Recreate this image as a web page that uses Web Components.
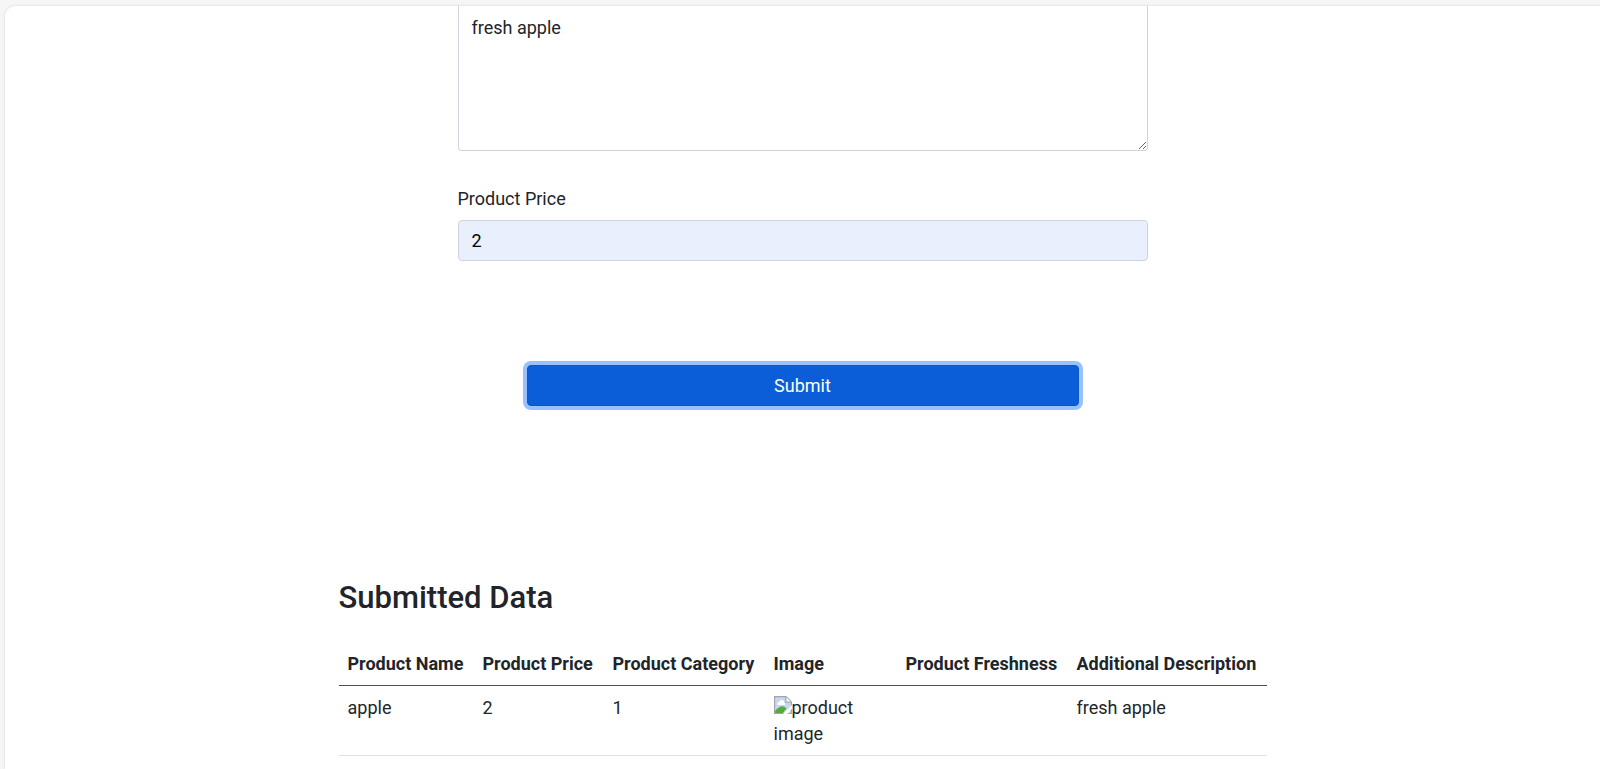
<!DOCTYPE html>
<html lang="en">
<head>
<meta charset="utf-8">
<title>Products</title>
<style>
html, body { height: 100%; }
body {
  margin: 0;
  background: #f6f6f6;
  color: #212529;
  font: 400 18px/26px Roboto, "Noto Sans", sans-serif;
  overflow: hidden;
}
</style>
</head>
<body>
<content-card>
  <product-form></product-form>
  <submitted-data></submitted-data>
</content-card>
<script>
class BaseElement extends HTMLElement {
  connectedCallback() {
    if (!this.shadowRoot) {
      this.attachShadow({ mode: "open" }).innerHTML = this.render();
    }
  }
}

customElements.define("content-card", class extends BaseElement {
  render() {
    return `
<style>
  :host { display: block; box-sizing: border-box; height: 100%; padding: 6px 0 0 5px; }
  main {
    box-sizing: border-box;
    height: 100%;
    overflow: hidden;
    display: flex;
    flex-direction: column;
    align-items: center;
    background: #fff;
    border-radius: 10px 0 0 0;
    box-shadow: 0 0 3px rgba(0, 0, 0, .14);
  }
</style>
<main><slot></slot></main>`;
  }
});

customElements.define("product-form", class extends BaseElement {
  render() {
    return `
<style>
  :host { display: block; width: 100%; max-width: 690px; }
  form { display: flex; flex-direction: column; }
  textarea, input {
    box-sizing: border-box;
    display: block;
    width: 100%;
    margin: 0;
    padding: 6px 13px;
    border: 1px solid #ced4da;
    border-radius: 4px;
    color: inherit;
    font: inherit;
    outline: 0;
  }
  textarea {
    height: 145px;
    padding-top: 9px;
    border-top: 0;
    border-radius: 0 0 4px 4px;
    background: #fff;
    resize: vertical;
  }
  label { margin: 35px 0 8px; }
  input { height: 41px; background: #e8f0fe; color: #000; }
  button {
    align-self: center;
    width: 80%;
    height: 41px;
    margin: 104px 0 0;
    padding: 0;
    border: 1px solid #0a58ca;
    border-radius: 4px;
    background: #0b5ed7;
    box-shadow: 0 0 0 4px #98c1fe;
    color: #fff;
    font: inherit;
  }
</style>
<form onsubmit="return false">
  <textarea aria-label="Additional Description">fresh apple</textarea>
  <label for="price">Product Price</label>
  <input id="price" type="text" value="2">
  <button type="submit">Submit</button>
</form>`;
  }
});

customElements.define("missing-image", class extends BaseElement {
  render() {
    return `
<style>
  :host { display: block; max-width: 110px; }
  svg { width: 18px; height: 18px; vertical-align: 0; }
</style>
<svg viewBox="0 0 16 16" aria-hidden="true">
  <path d="M0 0h11l5 5v11H0z" fill="#a3a3a8"/>
  <path d="M1 1h9v5h5v9H1z" fill="#c5d7f5"/>
  <path d="M11 1v4h4z" fill="#f2f2f2"/>
  <path d="M3 7a2 2 0 0 1 2-2 2 2 0 0 1 4 1 1 1 0 0 1 0 2H3z" fill="#fff"/>
  <path d="M1 15v-2c2-2 4-4 6-4s3 1 4 2l-3 4z" fill="#56aa3b"/>
  <path d="M16 8v3l-4 5H8z" fill="#fff"/>
</svg><slot></slot>`;
  }
});

customElements.define("submitted-data", class extends BaseElement {
  render() {
    return `
<style>
  :host { display: block; width: 100%; max-width: 928px; margin-top: 173px; }
  h3 { margin: 0 0 27px; font-size: 31px; line-height: 37px; font-weight: 500; }
  table { width: 100%; table-layout: fixed; border-collapse: collapse; }
  th, td { padding: 8px 0 8px 9px; text-align: left; vertical-align: top; white-space: nowrap; }
  th { border-bottom: 1px solid #4d5154; font-weight: 700; }
  td { padding-top: 9px; border-bottom: 1px solid #dee2e6; }
  td missing-image { white-space: normal; }
  .name { width: 126px; }
  .price { width: 121px; }
  .category { width: 152px; }
  .image { width: 123px; }
  .freshness { width: 162px; }
</style>
<h3>Submitted Data</h3>
<table>
  <thead>
    <tr>
      <th class="name" scope="col">Product Name</th>
      <th class="price" scope="col">Product Price</th>
      <th class="category" scope="col">Product Category</th>
      <th class="image" scope="col">Image</th>
      <th class="freshness" scope="col">Product Freshness</th>
      <th scope="col">Additional Description</th>
    </tr>
  </thead>
  <tbody>
    <tr>
      <td>apple</td>
      <td>2</td>
      <td>1</td>
      <td><missing-image>product image</missing-image></td>
      <td></td>
      <td>fresh apple</td>
    </tr>
  </tbody>
</table>`;
  }
});
</script>
</body>
</html>
